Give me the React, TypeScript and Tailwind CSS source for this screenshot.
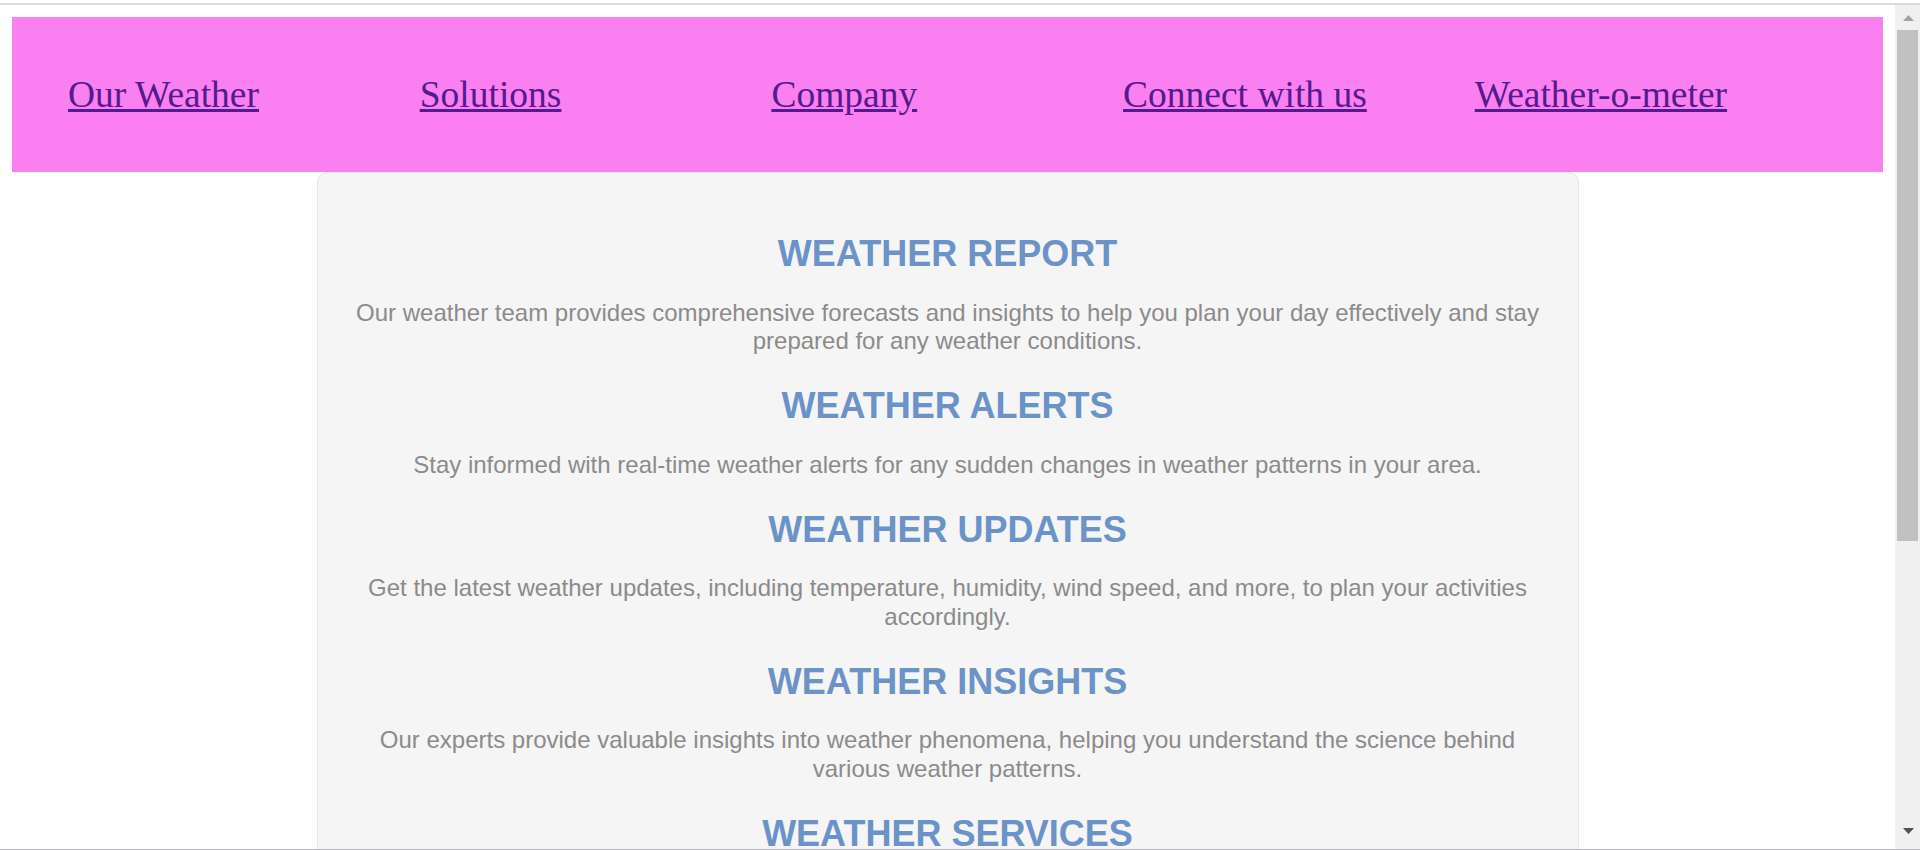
const links = ["Our Weather", "Solutions", "Company", "Connect with us", "Weather-o-meter"];

const sections = [
  {
    title: "WEATHER REPORT",
    text: "Our weather team provides comprehensive forecasts and insights to help you plan your day effectively and stay prepared for any weather conditions.",
  },
  {
    title: "WEATHER ALERTS",
    text: "Stay informed with real-time weather alerts for any sudden changes in weather patterns in your area.",
  },
  {
    title: "WEATHER UPDATES",
    text: "Get the latest weather updates, including temperature, humidity, wind speed, and more, to plan your activities accordingly.",
  },
  {
    title: "WEATHER INSIGHTS",
    text: "Our experts provide valuable insights into weather phenomena, helping you understand the science behind various weather patterns.",
  },
  {
    title: "WEATHER SERVICES",
    text: "From personalized forecasts to detailed climate reports, our services are designed to keep you one step ahead of the weather.",
  },
];

function Scrollbar() {
  return (
    <div className="w-[25px] shrink-0 bg-[#f0f0f0] flex flex-col">
      <div className="h-[25px] flex items-center justify-center pl-[1px]">
        <svg width="11" height="6" viewBox="0 0 11 6">
          <path d="M5.5 0 L11 6 L0 6 Z" fill="#a3a3a3" />
        </svg>
      </div>
      <div className="h-[511px] ml-[2px] mr-[2px] bg-[#c1c1c1]" />
      <div className="flex-1" />
      <div className="h-[25px] flex items-start justify-center pt-[4px] pl-[1px]">
        <svg width="11" height="6" viewBox="0 0 11 6">
          <path d="M0 0 L11 0 L5.5 6 Z" fill="#505050" />
        </svg>
      </div>
    </div>
  );
}

export default function App() {
  return (
    <div className="h-[850px] w-full overflow-hidden bg-white flex flex-col">
      <div className="h-[3px] shrink-0" />
      <div className="h-[2px] shrink-0 bg-[#dcdcdc]" />
      <div className="flex flex-1 min-h-0">
        <div className="flex-1 min-w-0 overflow-hidden pt-[12px]">
          {/* nav bar */}
          <nav className="mx-[12px] h-[155px] bg-[#fa7ff0] flex items-center pl-[56px]">
            {links.map((l) => (
              <div key={l} className="w-[351.7px] shrink-0">
                <a
                  href="#"
                  className="text-[37.5px] leading-[42px] text-[#551a8b] underline"
                  style={{ fontFamily: '"Liberation Serif", "Times New Roman", serif' }}
                >
                  {l}
                </a>
              </div>
            ))}
          </nav>

          {/* content card */}
          <div
            className="mx-auto w-[1262px] rounded-[10px] border border-[#e6e6e6] bg-[#f5f5f5] px-[32px] pt-[60px] pb-[40px]"
            style={{ fontFamily: '"Liberation Sans", Arial, sans-serif' }}
          >
            {sections.map((s, i) => (
              <div key={s.title} className={i === 0 ? "" : "mt-[30px]"}>
                <h2 className="text-center text-[36px] leading-[41px] font-bold text-[#6b93c8]">
                  {s.title}
                </h2>
                <p className="mt-[24.5px] text-center text-[24px] leading-[28.3px] text-[#8b8b8b]">
                  {s.text}
                </p>
              </div>
            ))}
          </div>
        </div>
        <Scrollbar />
      </div>
      <div className="h-px shrink-0 bg-[#b9b6c2]" />
    </div>
  );
}
